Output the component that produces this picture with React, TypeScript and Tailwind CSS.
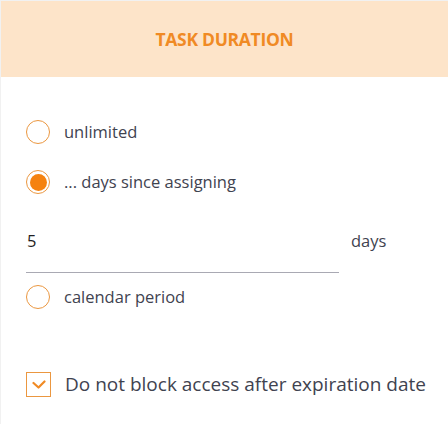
import { useState } from 'react';

type Mode = 'unlimited' | 'days' | 'calendar';

const Radio = ({ checked, label, onClick }: { checked: boolean; label: string; onClick: () => void }) => (
  <button onClick={onClick} className="flex items-center gap-[14px] text-left">
    <span className="w-[24px] h-[24px] rounded-full border-[1.5px] border-[#eb9740] bg-white flex items-center justify-center shrink-0">
      {checked && <span className="w-[17px] h-[17px] rounded-full bg-[#f5820f]" />}
    </span>
    <span className="text-[16.5px] text-[#3f4350]">{label}</span>
  </button>
);

export default function App() {
  const [mode, setMode] = useState<Mode>('days');
  const [days, setDays] = useState('5');
  const [noBlock, setNoBlock] = useState(true);

  return (
    <div className="w-[448px] h-[424px] bg-white border-l border-t border-[#f1f1f1] font-['Open_Sans',sans-serif] overflow-hidden">
      <div className="h-[76px] bg-[#fde4c9] flex items-center justify-center">
        <h2 className="text-[17.5px] font-bold text-[#f08a24] tracking-[-0.3px]">TASK DURATION</h2>
      </div>

      <div className="pl-[25px] pt-[43px] flex flex-col">
        <Radio checked={mode === 'unlimited'} label="unlimited" onClick={() => setMode('unlimited')} />
        <div className="mt-[25px]">
          <Radio checked={mode === 'days'} label="... days since assigning" onClick={() => setMode('days')} />
        </div>

        <div className="mt-[34px] flex items-start">
          <div className="w-[313px] border-b border-[#a9a9b3] h-[44px]">
            <input
              value={days}
              onChange={(e) => setDays(e.target.value)}
              className="w-full outline-none text-[16.5px] text-[#1f1f24] pl-[1px] leading-[24px]"
            />
          </div>
          <span className="ml-[12px] text-[16.5px] text-[#3f4350] leading-[24px]">days</span>
        </div>

        <div className="mt-[12px]">
          <Radio checked={mode === 'calendar'} label="calendar period" onClick={() => setMode('calendar')} />
        </div>

        <button onClick={() => setNoBlock(!noBlock)} className="mt-[61px] flex items-center gap-[14px] text-left">
          <span className="w-[25px] h-[25px] border-[1.5px] border-[#eb9740] flex items-center justify-center shrink-0">
            {noBlock && (
              <svg width="14" height="10" viewBox="0 0 14 10" fill="none">
                <path d="M1.5 3 L6.5 7.5 L12.5 1.5" stroke="#f08a24" strokeWidth="2.2" strokeLinecap="round" strokeLinejoin="round" />
              </svg>
            )}
          </span>
          <span className="text-[19px] text-[#3f4350]">Do not block access after expiration date</span>
        </button>
      </div>
    </div>
  );
}
